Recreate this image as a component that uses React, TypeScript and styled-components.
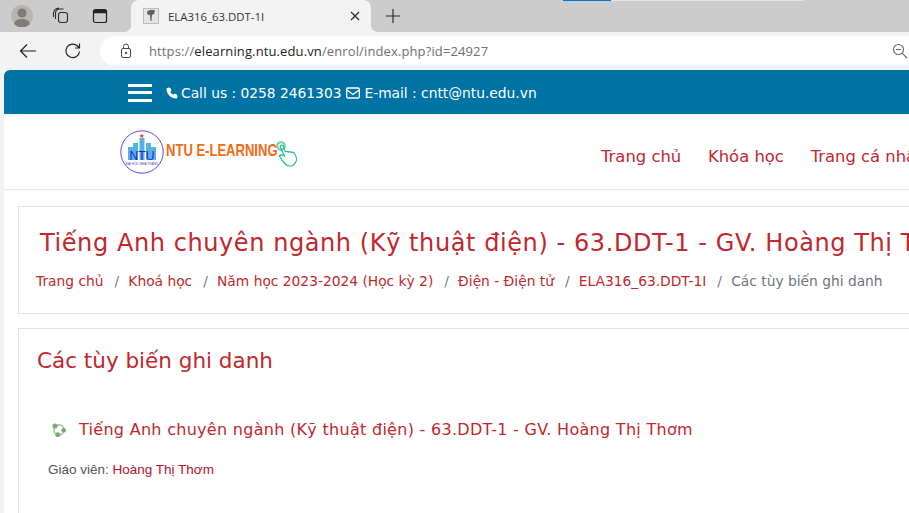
import React from "react";
import styled, { createGlobalStyle } from "styled-components";

const Global = createGlobalStyle`
  html, body { margin: 0; padding: 0; width: 909px; height: 513px; overflow: hidden; background: #f3f3f3; }
  * { box-sizing: border-box; }
`;
const Shell = styled.div`width: 909px; height: 513px; overflow: hidden; display: flex; flex-direction: column; font-family: "DejaVu Sans", sans-serif;`;
const TabBar = styled.div`height: 32px; background: #cccccc; display: flex; align-items: flex-end; position: relative; flex: none;`;
const TopMark = styled.div<{ $x: number; $w: number; $c: string }>`
  position: absolute; top: 0; left: ${p => p.$x}px; width: ${p => p.$w}px; height: 1px; background: ${p => p.$c};
`;
const TabIconSlot = styled.div<{ $w: number }>`width: ${p => p.$w}px; height: 32px; display: flex; align-items: center; justify-content: center; flex: none;`;
const Tab = styled.div`
  position: relative; width: 240px; height: 32px; background: #f3f3f3; border-radius: 8px 8px 0 0; display: flex; align-items: center;
  padding: 0 11px 0 12px; margin-left: 9px; flex: none;
  font: 12px "Open Sans", sans-serif; color: #333;
  &::before, &::after { content: ""; position: absolute; bottom: 0; width: 6px; height: 6px; }
  &::before { left: -6px; background: radial-gradient(circle at 0 0, #ccc 5.500px, #f3f3f3 6px); }
  &::after { right: -6px; background: radial-gradient(circle at 100% 0, #ccc 5.500px, #f3f3f3 6px); }
`;
const TabTitle = styled.span`margin-left: 9px; flex: 1; white-space: nowrap; font-size: 11.4px;`;
const Toolbar = styled.div`height: 38px; background: #f3f3f3; display: flex; align-items: center; flex: none;`;
const ToolBtn = styled.div<{ $w: number }>`width: ${p => p.$w}px; height: 32px; display: flex; align-items: center; justify-content: center; flex: none;`;
const Address = styled.div`
  margin-left: 11px; flex: 1; height: 30px; background: #fff; border-radius: 15px 0 0 15px; display: flex; align-items: center;
  padding: 0 1px 0 19px; font: 13px "Open Sans", sans-serif; color: #6f6f6f; white-space: nowrap;
`;
const Url = styled.div`margin-left: 16px; flex: 1; letter-spacing: 0.12px;`;
const Host = styled.span`color: #1c1c1c;`;
const Page = styled.div`flex: 1; background: #fff; margin-left: 4px; border-radius: 6px 0 0 0; overflow: hidden; display: flex; flex-direction: column; min-height: 0;`;
const InfoBar = styled.div`height: 44px; background: #0073a5; display: flex; align-items: center; padding: 1px 0 0 124px; color: #fff; flex: none; font-size: 13.8px; white-space: nowrap;`;
const Burger = styled.div`width: 24px; display: flex; flex-direction: column; gap: 4.500px; margin-right: 14px; span { height: 3px; background: #fff; display: block; }`;
const Contact = styled.span<{ $gap: number }>`display: inline-flex; align-items: center; margin-right: 5px; svg { margin-right: ${p => p.$gap}px; }`;
const Header = styled.div`height: 76px; border-bottom: 1px solid #e6e6e6; display: flex; align-items: center; flex: none; box-shadow: inset 0 3px 3px -2px rgba(0,0,0,.08);`;
const Logo = styled.div`width: 597px; padding-left: 116px; height: 60px; display: flex; align-items: center; position: relative; flex: none;`;
const LogoText = styled.span`margin: -2px 0 0 2px; font: 700 16.500px "Liberation Sans", sans-serif; color: #f26a12; transform: scaleX(.79); transform-origin: left; white-space: nowrap;`;
const Hand = styled.svg`position: absolute; left: 271px; top: 18px;`;
const Nav = styled.nav`display: flex; gap: 26.800px; margin-top: 9px; font-size: 16.4px; color: #c1272d; white-space: nowrap;`;
const Body = styled.div`flex: 1; padding: 16px 0 0 14px; min-height: 0;`;
const Card = styled.section<{ $h: number }>`border: 1px solid #e3e3e3; border-right: 0; height: ${p => p.$h}px; margin-bottom: 14px; overflow: hidden; white-space: nowrap;`;
const CourseTitle = styled.h1`margin: 20px 0 0 21px; font-weight: 400; font-size: 24px; line-height: 32px; color: #c1272d; letter-spacing: 0.58px;`;
const Crumbs = styled.div`margin: 11px 0 0 17px; font-size: 13.8px; line-height: 22px; display: flex; color: #c1272d;`;
const Sep = styled.span`color: #6a7c8e; margin: 0 9.200px 0 11px;`;
const Current = styled.span`color: #6c757d;`;
const Heading = styled.h2`margin: 17px 0 0 18px; font-weight: 400; font-size: 21.500px; line-height: 30px; color: #c1272d;`;
const CourseRow = styled.div`display: flex; align-items: center; margin: 42px 0 0 33px; font-size: 16px; line-height: 24px; color: #c1272d; letter-spacing: 0.29px;`;
const CourseIcon = styled.svg`margin-right: 13px; flex: none;`;
const Teacher = styled.div`margin: 16px 0 0 29px; font: 13.500px/24px "Liberation Sans", sans-serif; color: #555;`;
const TeacherName = styled.span`color: #b5122b;`;

export default function App() {
  return (
    <Shell>
      <Global />
      <TabBar>
        <TopMark $x={563} $w={48} $c="#0078d4" />
        <TopMark $x={611} $w={193} $c="#e4e4e4" />
        <TabIconSlot $w={44}>
          <svg width="22" height="22" viewBox="0 0 22 22"><circle cx="11" cy="11" r="11" fill="#b9b5ae" /><circle cx="11" cy="8" r="4.600" fill="#7c7c7c" /><path d="M3 19c1-4 4-5 8-5s7 1 8 5a11 11 0 0 1-16 0z" fill="#7c7c7c" /></svg>
        </TabIconSlot>
        <TabIconSlot $w={34}>
          <svg width="18" height="18" viewBox="0 0 18 18" fill="none" stroke="#2b2b2b" strokeWidth="1.100"><rect x="6.500" y="5.500" width="9" height="10" rx="2.500" /><path d="M3.500 12V6a4 4 0 0 1 4-4h4M1.500 10V6A6 6 0 0 1 7 1" /></svg>
        </TabIconSlot>
        <TabIconSlot $w={44}>
          <svg width="16" height="16" viewBox="0 0 16 16" fill="none"><rect x="1.500" y="1.500" width="13" height="13" rx="2" stroke="#222" strokeWidth="1.200" /><path d="M1.500 3.500a2 2 0 0 1 2-2h9a2 2 0 0 1 2 2v1.700h-13z" fill="#222" /></svg>
        </TabIconSlot>
        <Tab>
          <svg width="16" height="16" viewBox="0 0 16 16"><rect x=".5" y=".5" width="15" height="15" fill="#e4e4e4" stroke="#bdbdbd" /><path d="M4 4c1-2 5-2.500 8-1.500L11 6 9 7l-.5 6H7.500L7 7 4.500 6.500z" fill="#5f5f5f" /></svg>
          <TabTitle>ELA316_63.DDT-1I</TabTitle>
          <svg width="10" height="10" viewBox="0 0 10 10" stroke="#222" strokeWidth="1.100"><path d="M1 1l8 8M9 1l-8 8" /></svg>
        </Tab>
        <TabIconSlot $w={44}>
          <svg width="14" height="14" viewBox="0 0 14 14" stroke="#222" strokeWidth="1.100"><path d="M7 0v14M0 7h14" /></svg>
        </TabIconSlot>
      </TabBar>
      <Toolbar>
        <ToolBtn $w={56}>
          <svg width="18" height="16" viewBox="0 0 18 16" fill="none" stroke="#222" strokeWidth="1.200"><path d="M17 8H1.500M8 1.500L1.500 8 8 14.500" /></svg>
        </ToolBtn>
        <ToolBtn $w={33}>
          <svg width="18" height="18" viewBox="0 0 18 18" fill="none" stroke="#222" strokeWidth="1.200"><path d="M15.500 9.500a6.800 6.800 0 1 1-2-5.500l2 2M15.500 1.500V6H11" /></svg>
        </ToolBtn>
        <Address>
          <svg width="14" height="16" viewBox="0 0 14 16" fill="none" stroke="#444" strokeWidth="1"><rect x="2.500" y="5.500" width="9" height="9" rx="1.500" /><path d="M4.500 5.500V3.500a2.500 2.500 0 0 1 5 0v2" /><circle cx="7" cy="10" r=".8" fill="#444" /></svg>
          <Url>https://<Host>elearning.ntu.edu.vn</Host>/enrol/index.php?id=24927</Url>
          <svg width="16" height="16" viewBox="0 0 16 16" fill="none" stroke="#666" strokeWidth="1.100"><circle cx="6.500" cy="6.500" r="5" /><path d="M4 6.500h5M10.200 10.200L15 15" /></svg>
        </Address>
      </Toolbar>
      <Page>
        <InfoBar>
          <Burger><span /><span /><span /></Burger>
          <Contact $gap={3}>
            <svg width="12" height="12" viewBox="0 0 12 12" fill="#fff"><path d="M2.500.5l2 .5 1 2.700-1.300 1.100a7 7 0 0 0 3 3l1.100-1.300 2.700 1 .5 2-.8 1.900C5 12 0 7 .6 1.300z" /></svg>
            Call us : 0258 2461303
          </Contact>
          <Contact $gap={4}>
            <svg width="14" height="12" viewBox="0 0 14 12" fill="none" stroke="#fff" strokeWidth="1.300"><rect x=".7" y="1" width="12.600" height="10" rx="1.300" /><path d="M1 3l6 4.500L13 3" /></svg>
            E-mail : cntt@ntu.edu.vn
          </Contact>
        </InfoBar>
        <Header>
          <Logo>
            <svg width="44" height="44" viewBox="0 0 44 44">
              <circle cx="22" cy="22" r="21.200" fill="#fff" stroke="#6a40e8" strokeWidth="1" />
              <path d="M8 17h5v13H8zM13 13h5v17h-5zM19.500 8h5v22h-5zM26 13h5v17h-5zM31 17h5v13h-5z" fill="#57b2e4" />
              <path d="M22 3l1 2.400 2.200.1-1.700 1.300.6 2.200-2.100-1.300-2.100 1.300.6-2.200-1.700-1.300 2.200-.1z" fill="#e33" transform="translate(5.300 1.200) scale(.75)" />
              <text x="22" y="30" textAnchor="middle" fontFamily="Liberation Sans" fontSize="12.500" fill="#2b22c8" textLength="25" lengthAdjust="spacingAndGlyphs">NTU</text>
              <text x="22" y="35" textAnchor="middle" fontFamily="Liberation Sans" fontSize="3.200" fill="#4a3bd0">ĐẠI HỌC NHA TRANG</text>
            </svg>
            <LogoText>NTU E-LEARNING</LogoText>
            <Hand width="24" height="28" viewBox="0 0 24 28" fill="none" stroke="#1fc08e" strokeWidth="1.200">
              <circle cx="6" cy="6" r="3.800" strokeWidth="2" strokeOpacity=".7" />
              <path d="M5 6.500l4.500 9.500-1.500-.8-2.500-.4-1.200 1.300 4 5.500c1.500 2.400 3 3.900 5.500 4.400h3c2-.8 3.500-2.500 4.500-5 .6-2 .2-3.600-.5-5l-2-3.300c-1-.9-1.800-.8-2.700-.2-.8-1-1.800-1.100-2.800-.4-.8-.9-1.800-1-2.900-.3L8 5.500c-.6-1-2.300-.3-3 1z" />
            </Hand>
          </Logo>
          <Nav><span>Trang chủ</span><span>Khóa học</span><span>Trang cá nhân</span></Nav>
        </Header>
        <Body>
          <Card $h={108}>
            <CourseTitle>Tiếng Anh chuyên ngành (Kỹ thuật điện) - 63.DDT-1 - GV. Hoàng Thị Thơm</CourseTitle>
            <Crumbs>
              <span>Trang chủ</span><Sep>/</Sep>
              <span>Khoá học</span><Sep>/</Sep>
              <span>Năm học 2023-2024 (Học kỳ 2)</span><Sep>/</Sep>
              <span>Điện - Điện tử</span><Sep>/</Sep>
              <span>ELA316_63.DDT-1I</span><Sep>/</Sep>
              <Current>Các tùy biến ghi danh</Current>
            </Crumbs>
          </Card>
          <Card $h={200}>
            <Heading>Các tùy biến ghi danh</Heading>
            <CourseRow>
              <CourseIcon width="14" height="14" viewBox="0 0 14 14" fill="none">
                <circle cx="7" cy="7" r="5" stroke="#a9cea6" strokeWidth="1.800" />
                <circle cx="3" cy="3" r="2.500" fill="#74ad6f" /><circle cx="11.700" cy="7.300" r="2.300" fill="#74ad6f" /><circle cx="5.700" cy="11.700" r="2.400" fill="#74ad6f" />
              </CourseIcon>
              Tiếng Anh chuyên ngành (Kỹ thuật điện) - 63.DDT-1 - GV. Hoàng Thị Thơm
            </CourseRow>
            <Teacher>Giáo viên: <TeacherName>Hoàng Thị Thơm</TeacherName></Teacher>
          </Card>
        </Body>
      </Page>
    </Shell>
  );
}
